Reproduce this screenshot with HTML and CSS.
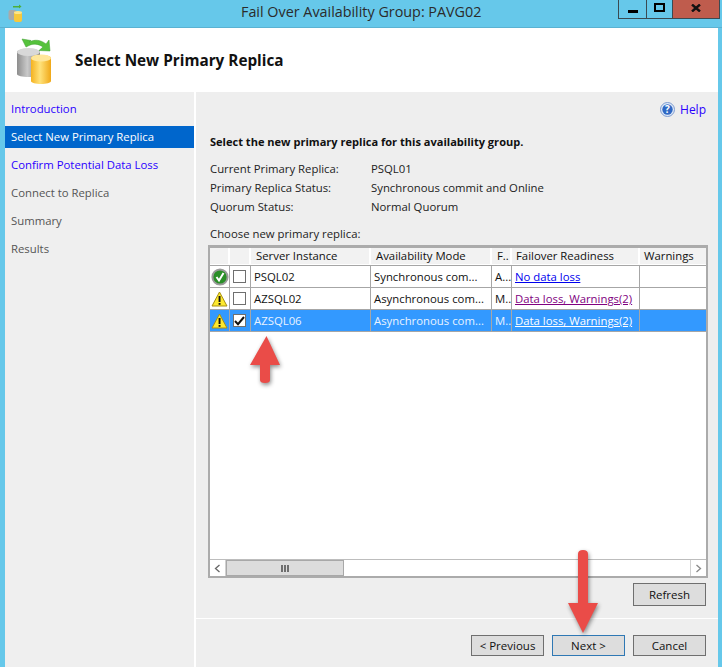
FILE: index.html
```html
<!DOCTYPE html>
<html lang="en">
<head>
<meta charset="utf-8">
<title>Fail Over Availability Group: PAVG02</title>
<link rel="stylesheet" href="styles.css">
</head>
<body>
<div class="window">
  <div class="titlebar">
    <svg class="app-icon" width="16" height="20" viewBox="0 0 16 20">
      <path d="M5 3 L11 3 L11 1.5 L13.5 3.5 L11 5.5 L11 4.5 L5 4.5 Z" fill="#4caf3a"/>
      <rect x="0.5" y="7" width="8" height="10" rx="2" fill="#a9a9a9"/>
      <rect x="6" y="8.5" width="8" height="10.5" rx="2" fill="#f7c83c"/>
      <ellipse cx="10" cy="9.5" rx="4" ry="1.5" fill="#fde48a"/>
    </svg>
    <div class="title">Fail Over Availability Group: PAVG02</div>
    <div class="controls">
      <div class="ctl ctl-min"><span class="min-glyph"></span></div>
      <div class="ctl ctl-max"><span class="max-glyph"></span></div>
      <div class="ctl ctl-close">
        <svg width="10" height="8" viewBox="0 0 10 8"><path d="M1 0.5 L9 7.5 M9 0.5 L1 7.5" stroke="#111" stroke-width="2.4"/></svg>
      </div>
    </div>
  </div>
  <div class="client">
    <header class="banner">
      <svg class="banner-icon" width="44" height="50" viewBox="0 0 44 50">
        <defs>
          <linearGradient id="grey" x1="0" x2="1" y1="0" y2="0"><stop offset="0" stop-color="#8d8d8d"/><stop offset="0.45" stop-color="#c9c9c9"/><stop offset="1" stop-color="#7c7c7c"/></linearGradient>
          <linearGradient id="gold" x1="0" x2="1" y1="0" y2="0"><stop offset="0" stop-color="#f5b21f"/><stop offset="0.45" stop-color="#ffe27a"/><stop offset="1" stop-color="#f0a818"/></linearGradient>
        </defs>
        <path d="M1 15 C1 11 24 11 24 15 L24 37 C24 41 1 41 1 37 Z" fill="url(#grey)"/>
        <ellipse cx="12.5" cy="15" rx="11.5" ry="4" fill="#d8d8d8"/>
        <path d="M15 21 C15 17 35 17 35 21 L35 44 C35 48 15 48 15 44 Z" fill="url(#gold)"/>
        <ellipse cx="25" cy="21" rx="10" ry="3.6" fill="#ffe79a"/>
        <path d="M10 10 L6 2 L15 3.5 L13 5 C19 2 25 3 30 7 L33 3 L34 14 L23 13.5 L27 10 C22 6.5 17 6.5 13 8.5 Z" fill="#55c23c" stroke="#3b9c2b" stroke-width="0.5"/>
      </svg>
      <h1 class="banner-title">Select New Primary Replica</h1>
    </header>
    <div class="body">
      <nav class="nav">
        <a class="nav-item link">Introduction</a>
        <a class="nav-item active">Select New Primary Replica</a>
        <a class="nav-item link">Confirm Potential Data Loss</a>
        <a class="nav-item muted">Connect to Replica</a>
        <a class="nav-item muted">Summary</a>
        <a class="nav-item muted">Results</a>
      </nav>
      <main class="main">
        <div class="content">
          <div class="help">
            <svg width="15" height="15" viewBox="0 0 15 15">
              <circle cx="7.5" cy="7.5" r="7" fill="#dfe9f7" stroke="#7d9bd0"/>
              <circle cx="7.5" cy="7.5" r="5.2" fill="#2f68c4"/>
              <text x="7.5" y="11" class="help-q" text-anchor="middle">?</text>
            </svg>
            <a class="help-link">Help</a>
          </div>
          <h2 class="lead">Select the new primary replica for this availability group.</h2>
          <dl class="facts">
            <dt>Current Primary Replica:</dt><dd>PSQL01</dd>
            <dt>Primary Replica Status:</dt><dd>Synchronous commit and Online</dd>
            <dt>Quorum Status:</dt><dd>Normal Quorum</dd>
          </dl>
          <div class="choose">Choose new primary replica:</div>
          <div class="grid">
            <div class="row head">
              <div class="c c-ic"></div><div class="c c-ck"></div>
              <div class="c c-srv">Server Instance</div>
              <div class="c c-mode">Availability Mode</div>
              <div class="c c-f">F..</div>
              <div class="c c-ready">Failover Readiness</div>
              <div class="c c-warn">Warnings</div>
            </div>
            <div class="row">
              <div class="c c-ic">
                <svg width="18" height="18" viewBox="0 0 18 18"><circle cx="9" cy="9" r="7.6" fill="#2a8f28" stroke="#9a9a9a" stroke-width="2"/><path d="M5.5 9 L8 12.5 L12.5 5" fill="none" stroke="#fff" stroke-width="2"/></svg>
              </div>
              <div class="c c-ck"><span class="box"></span></div>
              <div class="c c-srv">PSQL02</div>
              <div class="c c-mode">Synchronous com...</div>
              <div class="c c-f">A...</div>
              <div class="c c-ready"><a class="go">No data loss</a></div>
              <div class="c c-warn"></div>
            </div>
            <div class="row">
              <div class="c c-ic">
                <svg width="17" height="16" viewBox="0 0 17 16"><path d="M8.5 1 L16 15 L1 15 Z" fill="#fde92e" stroke="#a98f10" stroke-linejoin="round"/><rect x="7.6" y="5" width="1.9" height="6" fill="#111"/><rect x="7.6" y="12" width="1.9" height="1.8" fill="#111"/></svg>
              </div>
              <div class="c c-ck"><span class="box"></span></div>
              <div class="c c-srv">AZSQL02</div>
              <div class="c c-mode">Asynchronous com...</div>
              <div class="c c-f">M..</div>
              <div class="c c-ready"><a class="visited">Data loss, Warnings(2)</a></div>
              <div class="c c-warn"></div>
            </div>
            <div class="row selected">
              <div class="c c-ic">
                <svg width="17" height="16" viewBox="0 0 17 16"><path d="M8.5 1 L16 15 L1 15 Z" fill="#fde92e" stroke="#a98f10" stroke-linejoin="round"/><rect x="7.6" y="5" width="1.9" height="6" fill="#111"/><rect x="7.6" y="12" width="1.9" height="1.8" fill="#111"/></svg>
              </div>
              <div class="c c-ck"><span class="box checked"><svg width="11" height="10" viewBox="0 0 11 10"><path d="M1 5 L4 8.2 L10 1" fill="none" stroke="#111" stroke-width="2"/></svg></span></div>
              <div class="c c-srv">AZSQL06</div>
              <div class="c c-mode">Asynchronous com...</div>
              <div class="c c-f">M..</div>
              <div class="c c-ready"><a class="sel-link">Data loss, Warnings(2)</a></div>
              <div class="c c-warn"></div>
            </div>
            <div class="grid-fill"></div>
            <div class="hscroll">
              <div class="sb-btn"><svg width="7" height="9" viewBox="0 0 7 9"><path d="M5.5 1 L1.5 4.5 L5.5 8" fill="none" stroke="#666" stroke-width="1.3"/></svg></div>
              <div class="sb-thumb"><span></span><span></span><span></span></div>
              <div class="sb-track"></div>
              <div class="sb-btn sb-end"><svg width="7" height="9" viewBox="0 0 7 9"><path d="M1.5 1 L5.5 4.5 L1.5 8" fill="none" stroke="#888" stroke-width="1.3"/></svg></div>
            </div>
          </div>
          <div class="refresh-row"><button class="btn">Refresh</button></div>
        </div>
        <footer class="footer">
          <button class="btn">&lt; Previous</button>
          <button class="btn primary">Next &gt;</button>
          <button class="btn">Cancel</button>
        </footer>
      </main>
    </div>
  </div>
  <svg class="arrow arrow-up" width="34" height="56" viewBox="0 0 34 56">
    <path d="M18.5 4 L32 33 L22 33 L22 48 Q22 51 17 51 Q12 51 12 48 L12 33 L2 33 Z" fill="#ea4c48"/>
  </svg>
  <svg class="arrow arrow-down" width="34" height="88" viewBox="0 0 34 88">
    <path d="M11 6 Q11 2 16 2 Q21 2 21 6 L21 55 L31 55 L16 85 L1 55 L11 55 Z" fill="#ea4c48"/>
  </svg>
</div>
</body>
</html>
```
FILE: styles.css
```css
* { box-sizing: border-box; }
html, body { margin: 0; padding: 0; }
body {
  font-family: "Open Sans", "Noto Sans", "Liberation Sans", sans-serif;
  font-size: 11.35px;
  color: #222;
  background: #66c8ea;
}
.window {
  position: relative;
  width: 722px;
  height: 667px;
  overflow: hidden;
  background: #66c8ea;
  display: flex;
  flex-direction: column;
}
.titlebar {
  height: 28px;
  flex: none;
  display: flex;
  align-items: flex-start;
  padding: 0 2px 0 8px;
  border-bottom: 1px solid #5ab2d2;
}
.app-icon { flex: none; margin-top: 3px; }
.title {
  flex: 1;
  margin-left: 217px;
  padding-top: 2px;
  font-size: 14.35px;
  line-height: 20px;
  color: #2b2b2b;
}
.controls {
  flex: none;
  display: flex;
  height: 19px;
  border: 1px solid #3a4a52;
  border-top: 0;
}
.ctl { display: flex; align-items: center; justify-content: center; height: 18px; }
.ctl-min { width: 28px; border-right: 1px solid #3a4a52; }
.ctl-max { width: 26px; border-right: 1px solid #3a4a52; }
.ctl-close { width: 46px; background: #bf5c4d; }
.min-glyph { width: 10px; height: 3px; background: #000; margin-top: 5px; }
.max-glyph { width: 11px; height: 9px; border: 2px solid #000; margin-top: -3px; }
.ctl-close svg { margin-top: -3px; }

.client {
  flex: 1;
  margin: 0 4px 0 5px;
  display: flex;
  flex-direction: column;
  background: #fff;
  min-height: 0;
}
.banner {
  height: 64px;
  flex: none;
  display: flex;
  align-items: center;
  padding-left: 11px;
}
.banner-icon { flex: none; margin-top: 3px; }
.banner-title {
  margin: 0 0 0 15px;
  font-size: 15.3px;
  font-weight: 700;
  color: #111;
}
.body { flex: 1; display: flex; gap: 2px; min-height: 0; }
.nav {
  width: 189px;
  flex: none;
  background: #efefef;
  display: flex;
  flex-direction: column;
  padding-top: 6px;
}
.nav-item {
  height: 22px;
  line-height: 22px;
  padding-left: 6px;
  margin-bottom: 6px;
  white-space: nowrap;
}
.link { color: #2a00ff; }
.active { background: #0066cc; color: #fff; }
.muted { color: #555; }
.main {
  flex: 1;
  background: #eee;
  display: flex;
  flex-direction: column;
  min-width: 0;
}
.content {
  flex: 1;
  position: relative;
  padding: 0 11px 0 11px;
  display: flex;
  flex-direction: column;
  border-bottom: 1px solid #fff;
}
.help {
  height: 24px;
  margin-top: 5px;
  display: flex;
  align-items: center;
  justify-content: flex-end;
  gap: 5px;
  padding-right: 1px;
}
.help-q { font-size: 10px; font-weight: 700; fill: #fff; }
.help-link { color: #2a00ff; font-size: 12px; }
.lead {
  margin: 13px 0 0 3px;
  font-size: 11.05px;
  font-weight: 700;
  line-height: 16px;
  color: #111;
}
.facts {
  margin: 9px 0 0 3px;
  display: grid;
  grid-template-columns: 161px 1fr;
  grid-auto-rows: 19px;
  line-height: 19px;
}
.facts dt, .facts dd { margin: 0; }
.choose { margin: 8px 0 0 3px; line-height: 19px; height: 19px; }
.grid {
  margin: 2px 0 0 1px;
  height: 333px;
  width: 500px;
  border: 2px solid #ababab;
  border-top-width: 3px;
  background: #fff;
  display: flex;
  flex-direction: column;
}
.row {
  display: flex;
  height: 22px;
  flex: none;
  border-bottom: 1px solid #a6a6a6;
  line-height: 21px;
  color: #111;
}
.head { height: 18px; line-height: 16px; padding-bottom: 1px; background: #fff; }
.c {
  flex: none;
  border-right: 1px solid #a6a6a6;
  padding-left: 3px;
  white-space: nowrap;
  overflow: hidden;
  display: flex;
  align-items: center;
}
.head .c { background: #f2f2f2; border-right: 2px solid #fff; padding-left: 5px; background-clip: padding-box; }
.c-ic { width: 20px; padding-left: 1px; }
.c-ck { width: 21px; padding-left: 3px; }
.c-srv { width: 120px; }
.c-mode { width: 121px; }
.c-f { width: 20px; }
.c-ready { width: 128px; }
.c-warn { flex: 1; border-right: 0; }
.head .c-warn { border-right: 0; padding-left: 4px; }
.head .c-ready { padding-left: 4px; }
.box {
  width: 13px;
  height: 13px;
  background: #fff;
  border: 1px solid #6f6f6f;
  display: flex;
  align-items: center;
  justify-content: center;
}
.go { color: #0000ee; text-decoration: underline; }
.visited { color: #800080; text-decoration: underline; }
.sel-link { color: #fff; text-decoration: underline; }
.selected { background: #3399ff; color: #fff; }
.selected .c { color: #e8f3ff; }
.grid-fill { flex: 1; }
.hscroll {
  height: 17px;
  flex: none;
  display: flex;
  border-top: 1px solid #bdbdbd;
}
.sb-btn {
  width: 16px;
  display: flex;
  align-items: center;
  justify-content: center;
  background: #fff;
  border-right: 1px solid #d0d0d0;
}
.sb-end { border-right: 0; border-left: 1px solid #d0d0d0; }
.sb-thumb {
  width: 118px;
  background: #dcdcdc;
  border: 1px solid #a8a8a8;
  display: flex;
  align-items: center;
  justify-content: center;
  gap: 1px;
}
.sb-thumb span { width: 2px; height: 7px; background: #6e6e6e; }
.sb-track { flex: 1; }
.refresh-row { display: flex; justify-content: flex-end; margin-top: 5px; padding-right: 1px; }
.btn {
  width: 73px;
  height: 23px;
  padding: 0;
  background: #dddddd;
  border: 1px solid #6f6f6f;
  font: inherit;
  font-size: 11.5px;
  color: #111;
}
.primary { border-color: #2f78b4; }
.footer {
  flex: none;
  height: 48px;
  display: flex;
  justify-content: flex-end;
  gap: 8px;
  padding: 16px 12px 0 0;
}
.footer .btn { height: 21px; }
.arrow { position: absolute; filter: drop-shadow(1px 2px 2px rgba(0,0,0,.45)); }
.arrow-up { left: 248px; top: 332px; }
.arrow-down { left: 567px; top: 548px; }
```
